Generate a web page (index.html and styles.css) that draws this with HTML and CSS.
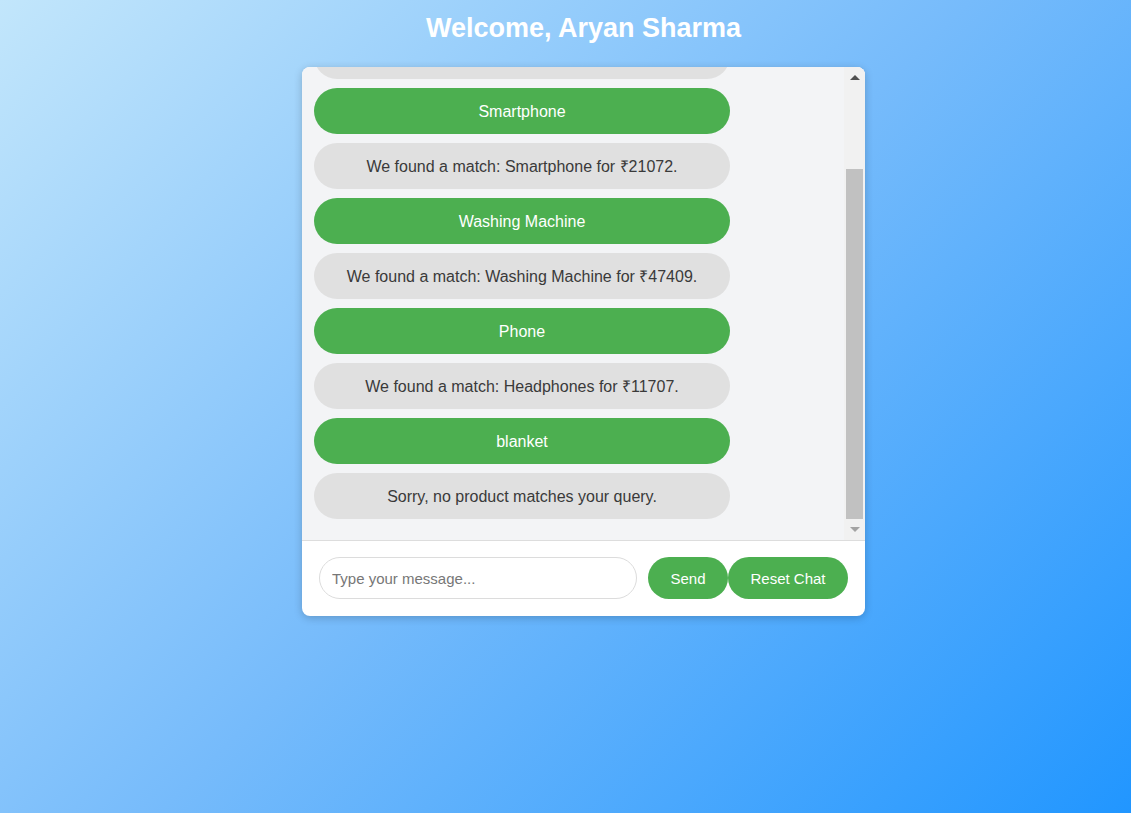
FILE: index.html
```html
<!DOCTYPE html>
<html lang="en">
<head>
<meta charset="utf-8">
<title>Product Chat</title>
<link rel="stylesheet" href="styles.css">
</head>
<body>
<div class="page">
  <h1 class="welcome">Welcome, Aryan Sharma</h1>
  <div class="chat-container">
    <div class="chat-box">
      <div class="viewport">
        <div class="messages">
          <div class="message user">Laptop</div>
          <div class="message bot">We found a match: Laptop for ₹58240.</div>
          <div class="message user">Smartphone</div>
          <div class="message bot">We found a match: Smartphone for ₹21072.</div>
          <div class="message user">Washing Machine</div>
          <div class="message bot">We found a match: Washing Machine for ₹47409.</div>
          <div class="message user">Phone</div>
          <div class="message bot">We found a match: Headphones for ₹11707.</div>
          <div class="message user">blanket</div>
          <div class="message bot">Sorry, no product matches your query.</div>
        </div>
      </div>
      <div class="scrollbar" aria-hidden="true">
        <div class="sb-button"><span class="arrow up"></span></div>
        <div class="sb-track"><div class="sb-thumb"></div></div>
        <div class="sb-button"><span class="arrow down"></span></div>
      </div>
    </div>
    <div class="input-area">
      <input class="chat-input" type="text" placeholder="Type your message...">
      <button class="btn send">Send</button>
      <button class="btn reset">Reset Chat</button>
    </div>
  </div>
</div>
</body>
</html>
```

FILE: styles.css
```css
* { box-sizing: border-box; }

html, body {
  margin: 0;
  height: 100%;
}

body {
  font-family: "Liberation Sans", Arial, sans-serif;
  background: linear-gradient(135deg, #c2e6fb 0%, #76bbfb 50%, #2196ff 100%);
  background-attachment: fixed;
  min-height: 813px;
}

.page {
  display: flex;
  flex-direction: column;
  align-items: center;
  padding-left: 36px;
}

.welcome {
  margin: 13px 0 23px;
  font-size: 27px;
  line-height: 31px;
  font-weight: bold;
  color: #ffffff;
}

.chat-container {
  width: 563px;
  background: #ffffff;
  border-radius: 8px;
  box-shadow: 0 2px 8px rgba(0, 0, 0, 0.2);
  overflow: hidden;
}

.chat-box {
  display: flex;
  height: 473px;
  background: #f3f4f6;
}

.viewport {
  flex: 1;
  min-width: 0;
  overflow: hidden;
  display: flex;
  flex-direction: column;
  justify-content: flex-end;
}

.messages {
  flex-shrink: 0;
  display: flex;
  flex-direction: column;
  gap: 9px;
  padding: 20px 12px 21px;
}

.message {
  width: 416px;
  padding: 15px 15px 13px;
  line-height: 18px;
  font-size: 16px;
  text-align: center;
  border-radius: 23px;
}

.message.user {
  background: #4caf50;
  color: #ffffff;
}

.message.bot {
  background: #e0e0e0;
  color: #3a3a3a;
}

/* scrollbar */
.scrollbar {
  width: 21px;
  flex-shrink: 0;
  display: flex;
  flex-direction: column;
  background: #f1f1f1;
}

.sb-button {
  height: 21px;
  display: flex;
  align-items: center;
  justify-content: center;
  padding-left: 1px;
}

.arrow {
  width: 0;
  height: 0;
  border-left: 5px solid transparent;
  border-right: 5px solid transparent;
}

.arrow.up {
  border-bottom: 5px solid #505050;
}

.arrow.down {
  border-top: 5px solid #a3a3a3;
}

.sb-track {
  flex: 1;
  display: flex;
  flex-direction: column;
  justify-content: flex-end;
}

.sb-thumb {
  height: 350px;
  margin: 0 2px;
  background: #c1c1c1;
}

/* input area */
.input-area {
  display: flex;
  align-items: center;
  border-top: 1px solid #dddddd;
  padding: 16px 17px 17px;
}

.chat-input {
  flex: 1;
  min-width: 0;
  height: 42px;
  border: 1px solid #dcdcdc;
  border-radius: 21px;
  padding: 0 12px;
  font-family: "Liberation Sans", Arial, sans-serif;
  font-size: 15px;
  color: #333;
  background: #fff;
  outline: none;
}

.chat-input::placeholder {
  color: #777777;
}

.btn {
  height: 42px;
  border: none;
  border-radius: 21px;
  background: #4caf50;
  color: #ffffff;
  font-family: "Liberation Sans", Arial, sans-serif;
  font-size: 15px;
  padding: 0;
  white-space: nowrap;
  cursor: pointer;
}

.btn.send {
  margin-left: 11px;
  width: 80px;
}

.btn.reset {
  width: 120px;
}
```
